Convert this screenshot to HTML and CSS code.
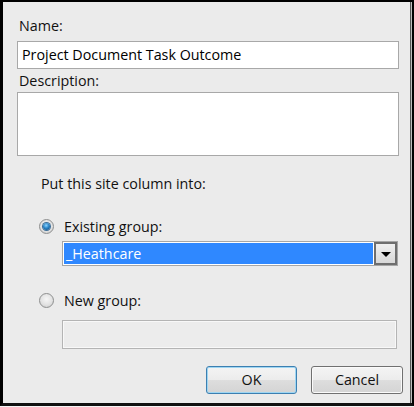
FILE: index.html
```html
<!DOCTYPE html>
<html>
<head>
<meta charset="utf-8">
<link rel="stylesheet" href="styles.css">
</head>
<body>
<div class="frame">
  <div class="dialog">
    <div class="label name-label">Name:</div>
    <div class="field name-field">Project Document Task Outcome</div>
    <div class="label desc-label">Description:</div>
    <div class="field desc-field"></div>
    <div class="section-title">Put this site column into:</div>
    <div class="radio-row first">
      <span class="radio checked"><span class="dot"></span></span>
      <span class="radio-text">Existing group:</span>
    </div>
    <div class="select">
      <div class="select-value">_Heathcare</div>
      <div class="select-btn"><span class="arrow"></span></div>
    </div>
    <div class="radio-row second">
      <span class="radio"></span>
      <span class="radio-text">New group:</span>
    </div>
    <div class="field new-field"></div>
    <div class="buttons">
      <div class="btn ok">OK</div>
      <div class="btn cancel">Cancel</div>
    </div>
  </div>
</div>
</body>
</html>
```
FILE: styles.css
```css
html, body {
  margin: 0;
  padding: 0;
  background: #f4f4f4;
}
.frame {
  width: 414px;
  height: 407px;
  box-sizing: border-box;
  padding-bottom: 1px;
}
.dialog {
  box-sizing: border-box;
  width: 414px;
  height: 406px;
  background: #ebebeb;
  border-left: 3px solid #000;
  border-top: 2px solid #000;
  border-bottom: 3px solid #111;
  border-right: 2px solid #000;
  box-shadow: inset -1px 0 0 #bdbdbd, inset -2px 0 0 #555;
  font-family: "Open Sans", "Noto Sans", sans-serif;
  font-size: 14.3px;
  color: #111;
  padding: 0 0 0 14px;
  display: flex;
  flex-direction: column;
  align-items: flex-start;
}
.label {
  height: 19px;
  line-height: 19px;
  margin-left: 2px;
}
.name-label { margin-top: 14px; margin-bottom: 6px; }
.desc-label { margin-top: 2px; margin-bottom: 2px; }
.field {
  box-sizing: border-box;
  background: #fff;
  border: 1px solid #a8a8a8;
}
.name-field {
  width: 382px;
  height: 28px;
  line-height: 26px;
  padding-left: 4px;
  color: #000;
}
.desc-field {
  width: 382px;
  height: 64px;
}
.section-title {
  margin-top: 18px;
  margin-left: 24px;
  height: 20px;
  line-height: 20px;
}
.radio-row {
  display: flex;
  align-items: center;
  margin-left: 22px;
  height: 20px;
}
.radio-row.first { margin-top: 22px; }
.radio-row.second { margin-top: 24px; }
.radio {
  box-sizing: border-box;
  width: 15px;
  height: 15px;
  border-radius: 50%;
  border: 1px solid #8e8f8f;
  background: radial-gradient(circle at 50% 40%, #f6f6f6 0%, #e2e2e2 55%, #c8c8c8 100%);
  display: flex;
  align-items: center;
  justify-content: center;
  margin-right: 10px;
}
.radio .dot {
  width: 7px;
  height: 7px;
  border-radius: 50%;
  background: radial-gradient(circle at 45% 35%, #8fd4ff 0%, #2a86c8 45%, #0b3f73 100%);
  box-shadow: 0 0 0 1px #3c6e98;
}
.select {
  box-sizing: border-box;
  margin-top: 5px;
  margin-left: 45px;
  width: 336px;
  height: 25px;
  border: 1px solid #a6a6a6;
  background: #fff;
  display: flex;
  padding: 1px;
}
.select-value {
  flex: 1;
  background: #2f88ff;
  color: #fff;
  line-height: 21px;
  padding-left: 2px;
  margin-right: 1px;
}
.select-btn {
  box-sizing: border-box;
  width: 23px;
  border: 2px solid #6e6e6e;
  background: linear-gradient(#efefef, #d8d8d8);
  display: flex;
  align-items: center;
  justify-content: center;
  margin: -1px -1px -1px 0;
}
.arrow {
  width: 0;
  height: 0;
  border-left: 5px solid transparent;
  border-right: 5px solid transparent;
  border-top: 5px solid #000;
  margin-top: 2px;
}
.new-field {
  margin-top: 10px;
  margin-left: 45px;
  width: 335px;
  height: 29px;
  background: #ececec;
  border: 1px solid #b4b4b4;
  box-shadow: inset 0 0 0 1px #f8f8f8;
}
.buttons {
  display: flex;
  margin-top: 17px;
  margin-left: 189px;
  gap: 14px;
}
.btn {
  box-sizing: border-box;
  height: 28px;
  line-height: 26px;
  text-align: center;
  border-radius: 3px;
  background: linear-gradient(#f4f4f4 0%, #ececec 48%, #dddddd 52%, #d4d4d4 100%);
  color: #111;
}
.btn.ok {
  width: 91px;
  border: 1px solid #3c7fb1;
  box-shadow: inset 0 0 0 1px #9fd6f2;
}
.btn.cancel {
  width: 92px;
  border: 1px solid #707070;
  box-shadow: inset 0 0 0 1px #fafafa;
}
```
